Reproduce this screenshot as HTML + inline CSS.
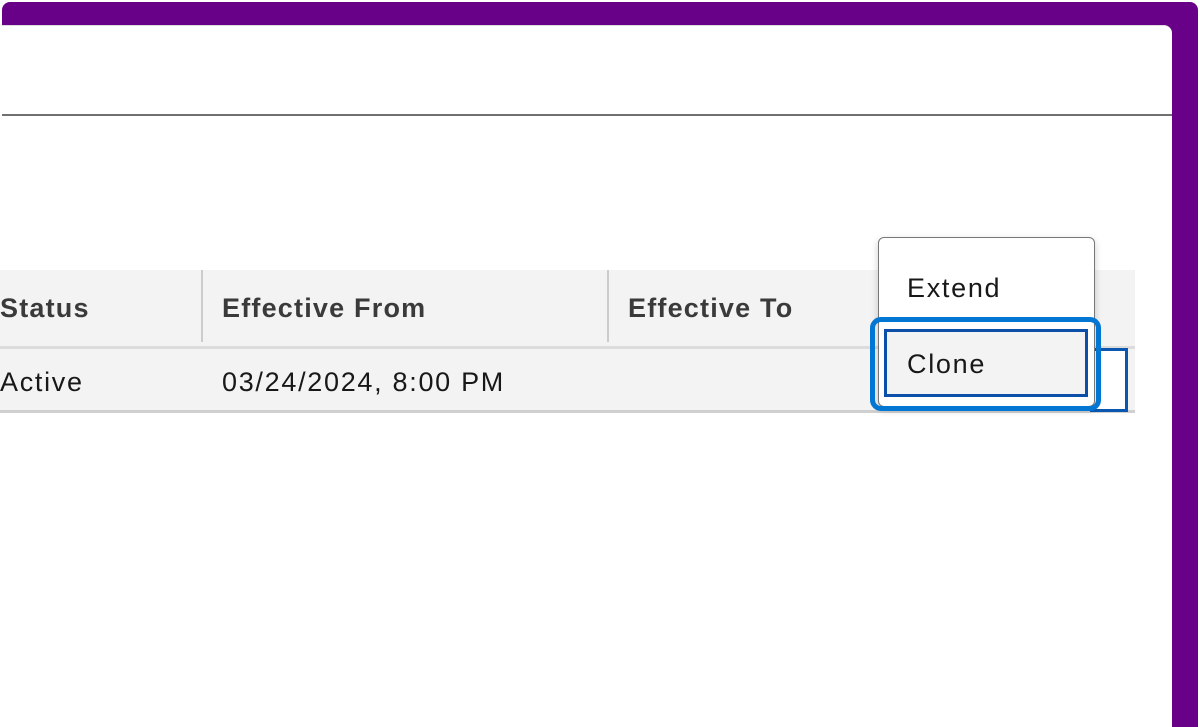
<!DOCTYPE html><html><head><style>
body{margin:0;width:1200px;height:727px;background:#fff;position:relative;overflow:hidden;font-family:"Liberation Sans",sans-serif;}
div{position:absolute;box-sizing:border-box}
.t{font-size:27px;color:#181818;letter-spacing:1.7px;line-height:30px}
.b{font-weight:bold;color:#3a3a3a;letter-spacing:1.2px}
</style></head><body>
<div style="left:2px;top:2px;width:1196px;height:725px;background:#680088;border-radius:8px 8px 0 0"></div>
<div style="left:2px;top:25px;width:1170px;height:702px;background:#fff;border-radius:0 8px 0 0;border-top:1px solid #ddd"></div>
<div style="left:2px;top:114px;width:1170px;height:2px;background:#707070"></div>
<div style="left:0;top:270px;width:1135px;height:76px;background:#f3f3f3"></div>
<div style="left:0;top:346px;width:1135px;height:3px;background:#dcdcdc"></div>
<div style="left:0;top:349px;width:1135px;height:61px;background:#f3f3f3"></div>
<div style="left:0;top:410px;width:1135px;height:3px;background:#d0d0d0"></div>
<div style="left:201px;top:270px;width:2px;height:72px;background:#ccc"></div>
<div style="left:607px;top:270px;width:2px;height:72px;background:#ccc"></div>
<div class="t b" style="left:0;top:293px">Status</div>
<div class="t b" style="left:222px;top:293px">Effective From</div>
<div class="t b" style="left:628px;top:293px">Effective To</div>
<div class="t" style="left:0;top:367px">Active</div>
<div class="t" style="left:222px;top:367px">03/24/2024, 8:00 PM</div>
<div style="left:1090px;top:348px;width:38px;height:64px;border:3px solid #0b57b0;background:#fff"></div>
<div style="left:878px;top:237px;width:217px;height:170px;background:#fff;border:1.5px solid #777;border-radius:6px;box-shadow:0 3px 8px rgba(0,0,0,.2)"></div>
<div class="t" style="left:907px;top:273px">Extend</div>
<div style="left:870px;top:317px;width:231px;height:94px;border:5px solid #0176d3;border-radius:11px"></div>
<div style="left:884px;top:329px;width:204px;height:68px;border:3px solid #0b4fa8;background:#f3f3f3"></div>
<div class="t" style="left:907px;top:349px">Clone</div>
</body></html>
